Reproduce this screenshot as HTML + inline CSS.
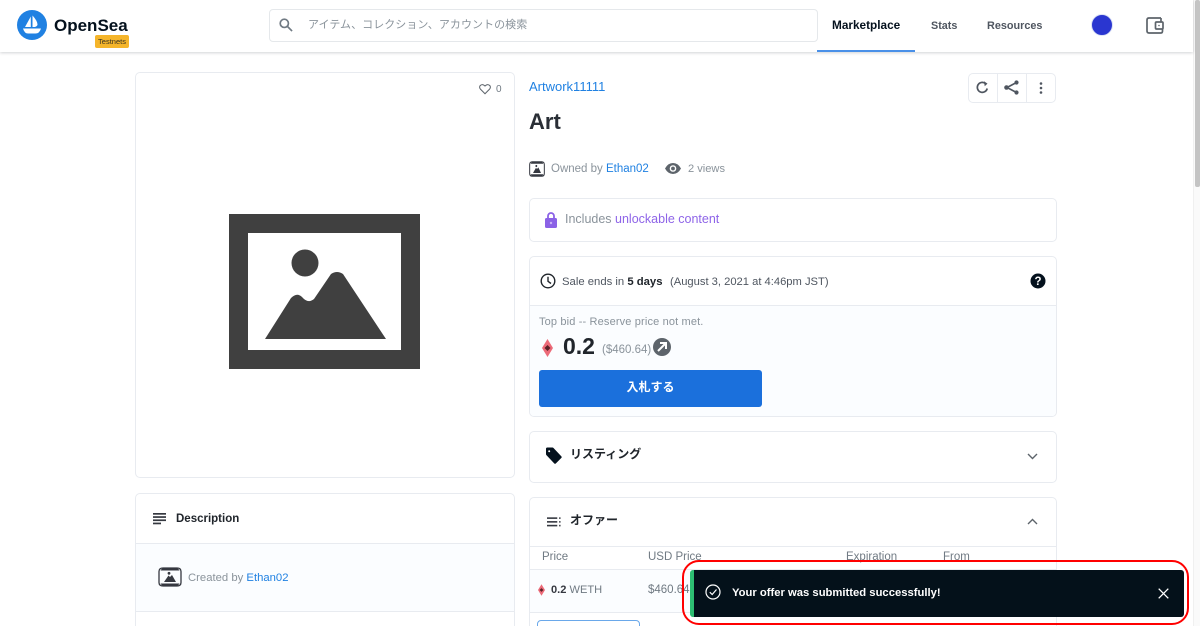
<!DOCTYPE html>
<html lang="ja"><head><meta charset="utf-8"><title>OpenSea</title>
<style>
*{box-sizing:border-box}
html,body{margin:0;padding:0;background:#fff;width:1200px;height:626px;overflow:hidden}
#p{position:relative;width:1200px;height:626px;overflow:hidden;font-family:"Liberation Sans","Noto Sans CJK JP",sans-serif;color:#353840;font-size:12px;background:#fff}
.a{position:absolute;white-space:nowrap;line-height:16px}
.box{position:absolute;border:1px solid #e8ebf0;border-radius:5px;background:#fff}
.g{color:#707a83}.l{color:#2081e2}.b{font-weight:700}
svg{position:absolute;overflow:visible}
</style></head><body><div id="p">

<div style="position:absolute;left:1193px;top:0;width:7px;height:626px;background:#fafafa;border-left:1px solid #f0f0f0"></div>
<div style="position:absolute;left:1195px;top:0;width:5px;height:187px;background:#c4c4c4;border-radius:2px"></div>

<div style="position:absolute;left:0;top:0;width:1193px;height:52px;background:#fff;box-shadow:0 1px 3px rgba(4,17,29,.18)"></div>
<svg style="left:17px;top:10px" width="30" height="30" viewBox="0 0 30 30"><circle cx="15" cy="15" r="15" fill="#2081e2"/><path d="M13.800 6.500 L13.800 17 L8 17Z M15.500 5.500 Q20.500 11 20.500 14.500 Q20.500 16 18 17 L15.500 17Z" fill="#fff"/><path d="M6 18.500 H24 Q22.500 23.500 18.500 23.500 H11 Q7.500 23.500 6 18.500Z" fill="#fff"/></svg>
<div class="a b" style="left:54px;top:16px;font-size:17px;line-height:20px;color:#04111d">OpenSea</div>
<div class="a b" style="left:95px;top:35px;width:34px;height:13px;background:#f5b52a;border-radius:2px;font-size:7.500px;line-height:13px;text-align:center;color:#3a3320;font-weight:400">Testnets</div>

<div style="position:absolute;left:269px;top:9px;width:549px;height:33px;border:1px solid #e5e8eb;border-radius:4px;background:#fff"></div>
<svg style="left:279px;top:18px" width="14" height="14" viewBox="0 0 15 15" fill="none" stroke="#707a83" stroke-width="1.800"><circle cx="5.700" cy="5.700" r="4.400"/><path d="M9 9l5 5"/></svg>
<div class="a" style="left:308px;top:17px;font-size:11px;color:#8a939b;letter-spacing:.05px">アイテム、コレクション、アカウントの検索</div>

<div class="a b" style="left:832px;top:17px;font-size:11.800px;color:#04111d">Marketplace</div>
<div style="position:absolute;left:817px;top:50px;width:98px;height:2px;background:#4a90e8"></div>
<div class="a b" style="left:931px;top:17.500px;font-size:10.800px;color:#4f5660">Stats</div>
<div class="a b" style="left:987px;top:17.500px;font-size:10.850px;color:#4f5660">Resources</div>
<div style="position:absolute;left:1091px;top:14px;width:22px;height:22px;border-radius:50%;background:#2a36d0;border:1px solid #dbe2f5"></div>
<svg style="left:1146px;top:17px" width="18" height="17" viewBox="0 0 18 17" fill="none" stroke="#5d646b" stroke-width="1.700"><path d="M15 1H3Q1 1 1 3V14Q1 16 3 16H15Q16.500 16 16.500 14V12M15 1V5"/><rect x="9.500" y="5" width="7.500" height="7" rx="1"/><circle cx="13" cy="8.500" r=".8" fill="#5d646b" stroke="none"/></svg>

<!-- Left column -->
<div class="box" style="left:135px;top:72px;width:380px;height:406px"></div>
<svg style="left:479px;top:83px" width="12" height="12" viewBox="0 0 14 13" fill="none" stroke="#5d646b" stroke-width="1.200"><path d="M7 12L1.800 6.800Q0 4.800 1.200 2.700Q3.800 -.1 7 3Q10.200 -.1 12.800 2.700Q14 4.800 12.200 6.800Z"/></svg>
<div class="a g" style="left:496px;top:82px;font-size:10px">0</div>

<svg style="left:229px;top:214px" width="191" height="155" viewBox="229 214 191 155"><path fill-rule="evenodd" d="M229 214H420V369H229ZM248 233V350H401V233Z" fill="#404040"/><circle cx="305" cy="263" r="13.500" fill="#404040"/><path d="M265 339L291 298Q297 292 302 297Q308 304 314 299L331 274Q337 270 343 274L386 339Z" fill="#404040"/></svg>

<div class="box" style="left:135px;top:493px;width:380px;height:140px;overflow:hidden">
  <div style="position:absolute;left:0;top:49px;width:100%;height:69px;background:#fbfdff;border-top:1px solid #e8ebf0;border-bottom:1px solid #e8ebf0"></div>
</div>
<svg style="left:153px;top:513px" width="13" height="12" viewBox="0 0 13 12" fill="#353840"><rect width="13" height="1.700"/><rect y="3.200" width="13" height="1.700"/><rect y="6.400" width="13" height="1.700"/><rect y="9.600" width="8" height="1.700"/></svg>
<div class="a b" style="left:176px;top:511px;font-size:11.500px;color:#20252b">Description</div>
<svg style="left:158px;top:567px" width="24" height="20" viewBox="0 0 24 20"><path d="M1 4.500Q1 1 5 1H19Q23 1 23 4.500V15.500Q23 19 19 19H5Q1 19 1 15.500Z" fill="none" stroke="#353840" stroke-width="1.300"/><path d="M2.500 3.500Q4 1 6 1H18Q20 1 21.500 3.500ZM2.500 16.500Q4 19 6 19H18Q20 19 21.500 16.500Z" fill="#353840"/><path d="M6 15L10.500 8.500 12 10 14 8 18 15Z" fill="#353840"/><circle cx="11" cy="6.300" r="1.400" fill="#353840"/></svg>
<div class="a" style="left:188px;top:570px;font-size:11.300px;color:#8a939b">Created by <span class="l">Ethan02</span></div>

<!-- Right column -->
<div class="a l" style="left:529px;top:79px;font-size:13px">Artwork11111</div>
<div class="a b" style="left:529px;top:109px;font-size:22px;line-height:26px;color:#2a2f36">Art</div>

<div class="box" style="left:968px;top:73px;width:88px;height:30px"></div>
<div style="position:absolute;left:997px;top:73px;width:1px;height:30px;background:#e8ebf0"></div>
<div style="position:absolute;left:1026px;top:73px;width:1px;height:30px;background:#e8ebf0"></div>
<svg style="left:976px;top:81px" width="13" height="13" viewBox="0 0 13 13" fill="none" stroke="#4f5660" stroke-width="1.700"><path d="M11.200 7.500A5 5 0 1 1 9.500 2.500"/><path d="M8 .3L11.500 2.600 8.700 5.300Z" fill="#4f5660" stroke="none"/></svg>
<svg style="left:1004px;top:80px" width="15" height="15" viewBox="0 0 15 15" fill="#4f5660" stroke="#4f5660"><path d="M12.500 2.500L3 7.500 12.500 12.500" fill="none" stroke-width="1.600"/><circle cx="12.500" cy="2.500" r="2.100" stroke="none"/><circle cx="2.500" cy="7.500" r="2.300" stroke="none"/><circle cx="12.500" cy="12.500" r="2.100" stroke="none"/></svg>
<svg style="left:1039px;top:82px" width="4" height="12" viewBox="0 0 4 12" fill="#4f5660"><circle cx="2" cy="1.500" r="1.300"/><circle cx="2" cy="6" r="1.300"/><circle cx="2" cy="10.500" r="1.300"/></svg>

<svg style="left:529px;top:161px" width="16" height="16" viewBox="0 0 24 20" preserveAspectRatio="none"><path d="M1 4.500Q1 1 5 1H19Q23 1 23 4.500V15.500Q23 19 19 19H5Q1 19 1 15.500Z" fill="none" stroke="#353840" stroke-width="1.500"/><path d="M2.500 3.500Q4 1 6 1H18Q20 1 21.500 3.500ZM2.500 16.500Q4 19 6 19H18Q20 19 21.500 16.500Z" fill="#353840"/><path d="M6 15L10.500 8.500 12 10 14 8 18 15Z" fill="#353840"/><circle cx="11" cy="6.300" r="1.400" fill="#353840"/></svg>
<div class="a" style="left:551px;top:161px;font-size:11.500px;color:#8a939b">Owned by <span class="l">Ethan02</span></div>
<svg style="left:665px;top:163px" width="16" height="11" viewBox="0 0 16 11"><path fill-rule="evenodd" d="M0 5.500Q3 0 8 0T16 5.500Q13 11 8 11T0 5.500ZM8 2.200A3.300 3.300 0 1 0 8 8.800 3.300 3.300 0 0 0 8 2.200Z" fill="#5d646b"/><circle cx="8" cy="5.500" r="1.900" fill="#5d646b"/></svg>
<div class="a" style="left:688px;top:161px;font-size:11.100px;color:#8a939b">2 views</div>

<div class="box" style="left:529px;top:198px;width:528px;height:44px"></div>
<svg style="left:545px;top:211px" width="12" height="17" viewBox="0 0 12 17"><path d="M3 8V5A3 3 0 0 1 9 5V8" fill="none" stroke="#8b62e6" stroke-width="1.800"/><rect y="7" width="12" height="10" rx="1.500" fill="#8b62e6"/><circle cx="6" cy="12" r="1.200" fill="#c9b4f5"/></svg>
<div class="a" style="left:565px;top:211px;font-size:12.500px;color:#8a939b">Includes <span style="color:#8e64e8">unlockable content</span></div>

<div class="box" style="left:529px;top:256px;width:528px;height:161px;overflow:hidden">
  <div style="position:absolute;left:0;top:48px;width:100%;height:113px;background:#fbfdff;border-top:1px solid #e8ebf0"></div>
</div>
<svg style="left:540px;top:273px" width="16" height="16" viewBox="0 0 16 16" fill="none" stroke="#20252b" stroke-width="1.400"><circle cx="8" cy="8" r="6.800"/><path d="M8 3.800V8.300L11 10.500"/></svg>
<div class="a" style="left:562px;top:274px;font-size:11.300px;color:#4f5660">Sale ends in <span class="b" style="color:#20252b">5 days</span></div>
<div class="a" style="left:670px;top:274px;font-size:11.200px;color:#4f5660">(August 3, 2021 at 4:46pm JST)</div>
<svg style="left:1030px;top:273px" width="16" height="16" viewBox="0 0 16 16"><circle cx="8" cy="8" r="7.500" fill="#04111d"/><text x="8" y="12" font-size="11.500" font-weight="700" fill="#fff" text-anchor="middle" font-family="Liberation Sans">?</text></svg>

<div class="a" style="left:539px;top:314px;font-size:11px;color:#8a939b;letter-spacing:.15px">Top bid -- Reserve price not met.</div>
<svg style="left:542px;top:339px" width="11" height="18" viewBox="0 0 11 18"><path d="M5.500 0L11 9 5.500 18 0 9Z" fill="#ec6a78"/><path d="M5.500 6L8.500 9 5.500 12 2.500 9Z" fill="#5a2228"/></svg>
<div class="a b" style="left:563px;top:333px;font-size:23px;line-height:26px;color:#20252b">0.2</div>
<div class="a" style="left:602px;top:342px;font-size:11.500px;color:#8a939b">($460.64)</div>
<svg style="left:653px;top:338px" width="18" height="18" viewBox="0 0 18 18"><circle cx="9" cy="9" r="9" fill="#5d646b"/><path d="M5 13L12.500 5.500M7 5H13V11" fill="none" stroke="#fff" stroke-width="2"/></svg>
<div class="a b" style="left:539px;top:370px;width:223px;height:37px;background:#1b70dc;border-radius:3px;color:#fff;line-height:35px;text-align:center;font-size:12px">入札する</div>

<div class="box" style="left:529px;top:431px;width:528px;height:52px"></div>
<svg style="left:545px;top:447px" width="17" height="17" viewBox="0 0 17 17"><path d="M1 1.800Q1 .5 2.300 .5H7.500Q8 .5 8.500 1L16.500 9.500Q17 10.200 16.500 10.800L10.800 16.500Q10 17 9.300 16.500L1.300 8Q1 7.500 1 7ZM4.200 3.200A1 1 0 1 0 4.200 5.200 1 1 0 0 0 4.200 3.200Z" fill="#04111d" fill-rule="evenodd"/></svg>
<div class="a b" style="left:570px;top:446px;font-size:12px;color:#20252b">リスティング</div>
<svg style="left:1027px;top:453px" width="11" height="7" viewBox="0 0 11 7" fill="none" stroke="#5d646b" stroke-width="1.400"><path d="M1 1l4.500 4.500L10 1"/></svg>

<div class="box" style="left:529px;top:497px;width:528px;height:140px;overflow:hidden">
  <div style="position:absolute;left:0;top:48px;width:100%;height:1px;background:#e8ebf0"></div>
  <div style="position:absolute;left:0;top:71px;width:100%;height:1px;background:#e8ebf0"></div>
  <div style="position:absolute;left:0;top:72px;width:100%;height:42px;background:#fbfdff"></div>
  <div style="position:absolute;left:0;top:114px;width:100%;height:1px;background:#e8ebf0"></div>
</div>
<svg style="left:547px;top:517px" width="14" height="10" viewBox="0 0 15 10" fill="#353840"><rect width="11" height="1.700"/><rect y="4" width="11" height="1.700"/><rect y="8" width="11" height="1.700"/><rect x="13" width="1.500" height="1.700"/><rect x="13" y="4" width="1.500" height="1.700"/><rect x="13" y="8" width="1.500" height="1.700"/></svg>
<div class="a b" style="left:570px;top:512px;font-size:12px;color:#20252b">オファー</div>
<svg style="left:1027px;top:518px" width="11" height="7" viewBox="0 0 11 7" fill="none" stroke="#5d646b" stroke-width="1.400"><path d="M1 6l4.500-4.500L10 6"/></svg>
<div class="a g" style="left:542px;top:549px;font-size:11.500px">Price</div>
<div class="a g" style="left:648px;top:549px;font-size:11.500px">USD Price</div>
<div class="a g" style="left:846px;top:549px;font-size:11.500px">Expiration</div>
<div class="a g" style="left:943px;top:549px;font-size:11.500px">From</div>
<svg style="left:538px;top:584px" width="7" height="12" viewBox="0 0 11 18"><path d="M5.500 0L11 9 5.500 18 0 9Z" fill="#ec6a78"/><path d="M5.500 6L8.500 9 5.500 12 2.500 9Z" fill="#5a2228"/></svg>
<div class="a" style="left:551px;top:582px;font-size:11.100px;color:#707a83"><span class="b" style="color:#353840">0.2</span> WETH</div>
<div class="a g" style="left:648px;top:582px;font-size:11.500px">$460.64</div>
<div style="position:absolute;left:537px;top:620px;width:103px;height:30px;border:1px solid #6aa8ea;border-radius:4px;background:#fff"></div>

<!-- Toast -->
<div style="position:absolute;left:682px;top:560px;width:507px;height:65px;border:2px solid #f00;border-radius:17px"></div>
<div style="position:absolute;left:690px;top:570px;width:494px;height:47px;background:#04111a;border-radius:3px;border-left:4px solid #2dbe72"></div>
<svg style="left:705px;top:584px" width="16" height="16" viewBox="0 0 16 16" fill="none" stroke="#fff" stroke-width="1.200"><circle cx="8" cy="8" r="7"/><path d="M4.800 8.200L7.200 10.500 11.500 5.500"/></svg>
<div class="a b" style="left:732px;top:585px;font-size:11.250px;color:#fff">Your offer was submitted successfully!</div>
<svg style="left:1158px;top:588px" width="11" height="11" viewBox="0 0 11 11" fill="none" stroke="#fff" stroke-width="1.300"><path d="M.7.700l9.600 9.600M10.300.700L.7 10.300"/></svg>

</div></body></html>
